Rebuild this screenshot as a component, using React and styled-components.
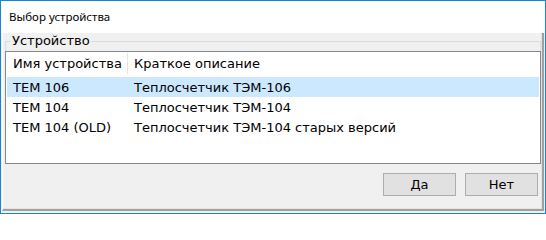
import React, { useState } from 'react'
import styled, { createGlobalStyle } from 'styled-components'

const devices = [
  { name: 'TEM 106', desc: 'Теплосчетчик ТЭМ-106' },
  { name: 'TEM 104', desc: 'Теплосчетчик ТЭМ-104' },
  { name: 'TEM 104 (OLD)', desc: 'Теплосчетчик ТЭМ-104 старых версий' },
]

const App = () => {
  const [selected, setSelected] = useState(0)

  return (
    <>
      <GlobalStyle />
      <Window>
        <TitleBar>Выбор устройства</TitleBar>
        <Body>
          <Panel>
            <Group>
              <Legend>Устройство</Legend>
              <ListBox>
                <HeaderRow>
                  <HeaderCell $first>Имя устройства</HeaderCell>
                  <HeaderCell>Краткое описание</HeaderCell>
                </HeaderRow>
                {devices.map((d, i) => (
                  <Row key={d.name} $active={i === selected} onClick={() => setSelected(i)}>
                    <Cell $first>{d.name}</Cell>
                    <Cell>{d.desc}</Cell>
                  </Row>
                ))}
              </ListBox>
            </Group>
            <ButtonRow>
              <Button>Да</Button>
              <Button>Нет</Button>
            </ButtonRow>
          </Panel>
        </Body>
      </Window>
    </>
  )
}

export default App

const GlobalStyle = createGlobalStyle`
  html, body {
    margin: 0;
    padding: 0;
    background: #ffffff;
  }
  * {
    box-sizing: border-box;
  }
`

const Window = styled.div`
  width: 546px;
  height: 214px;
  border: 1px solid #1883d7;
  background: #f0f0f0;
  display: flex;
  flex-direction: column;
  font-family: "DejaVu Sans", Verdana, sans-serif;
  font-size: 13px;
  color: #000;
`

const TitleBar = styled.div`
  height: 32px;
  flex: none;
  background: #ffffff;
  display: flex;
  align-items: center;
  padding-left: 8px;
  padding-bottom: 1px;
  font-family: "Noto Sans", "Open Sans", sans-serif;
  font-size: 11.5px;
`

const Body = styled.div`
  flex: 1;
  display: flex;
  padding: 0 1px 2px 1px;
`

const Panel = styled.div`
  flex: 1;
  display: flex;
  flex-direction: column;
  border-left: 1px solid #ffffff;
  border-right: 2px solid #a0a0a0;
  border-bottom: 2px solid #a0a0a0;
  box-shadow: inset -1px -1px 0 #e3e3e3;
`

const Group = styled.div`
  position: relative;
  margin: 8px 1px 0 2px;
  border-top: 1px solid #dcdcdc;
  border-left: 1px solid #dcdcdc;
  border-right: 1px solid #dcdcdc;
`

const Legend = styled.span`
  position: absolute;
  top: -9px;
  left: 5px;
  padding: 0 1px;
  background: #f0f0f0;
  line-height: 16px;
`

const ListBox = styled.div`
  margin: 9px -1px 0 -1px;
  height: 113px;
  border: 1px solid #828790;
  background: #ffffff;
  padding: 0 1px;
`

const HeaderRow = styled.div`
  display: flex;
  height: 25px;
  padding-top: 1px;
`

const HeaderCell = styled.div`
  display: flex;
  align-items: center;
  height: 21px;
  padding-left: 6px;
  width: ${(p) => (p.$first ? '121px' : 'auto')};
  flex: ${(p) => (p.$first ? 'none' : '1')};
  border-right: ${(p) => (p.$first ? '1px solid #e5e5e5' : 'none')};
  white-space: nowrap;
`

const Row = styled.div`
  display: flex;
  height: 20px;
  align-items: center;
  background: ${(p) => (p.$active ? '#cce8ff' : 'transparent')};
`

const Cell = styled.div`
  padding-left: 6px;
  width: ${(p) => (p.$first ? '121px' : 'auto')};
  flex: ${(p) => (p.$first ? 'none' : '1')};
  white-space: nowrap;
`

const ButtonRow = styled.div`
  display: flex;
  justify-content: flex-end;
  gap: 9px;
  margin-top: 9px;
  padding-right: 4px;
`

const Button = styled.button`
  width: 73px;
  height: 23px;
  background: #e1e1e1;
  border: 1px solid #adadad;
  font-family: "DejaVu Sans", Verdana, sans-serif;
  font-size: 13px;
  color: #000;
  padding: 0;
`
